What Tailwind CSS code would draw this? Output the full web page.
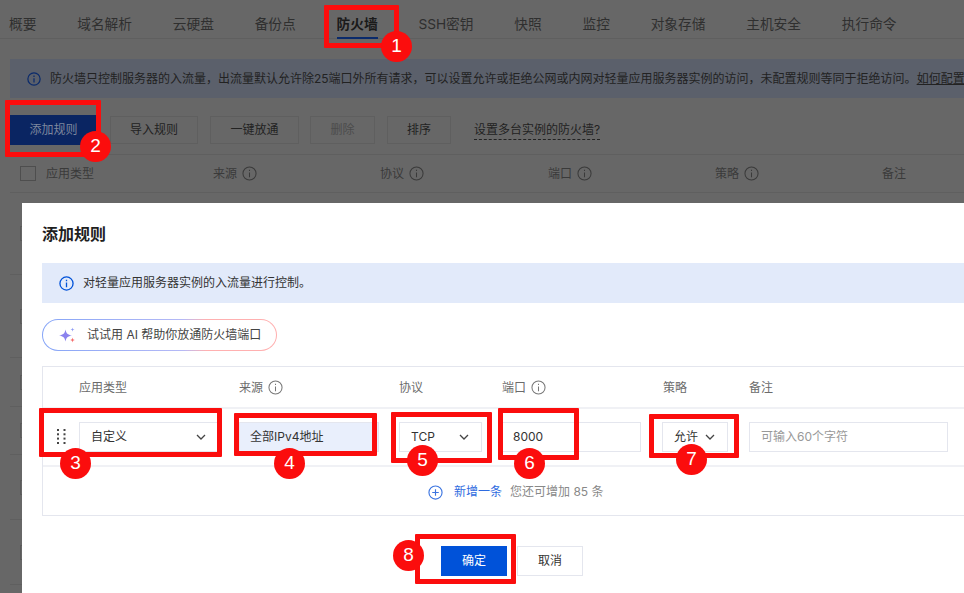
<!DOCTYPE html>
<html lang="zh-CN">
<head>
  <meta charset="UTF-8" />
  <title>添加规则</title>
  <script src="https://cdn.jsdelivr.net/npm/@tailwindcss/browser@4"></script>
</head>
<body class="w-[964px] h-[593px] overflow-hidden relative bg-[#676767] text-[#2b2b2b] font-['Inter','Noto_Sans_CJK_SC',sans-serif] text-[12px]">

  <!-- page behind the dialog -->
  <div class="flex items-center gap-[40.8px] h-[39px] pl-[9px] pt-[10px] border-b border-[#5f5f5f] text-[13.7px] text-[#2f2f2f] whitespace-nowrap">
    <span>概要</span>
    <span>域名解析</span>
    <span>云硬盘</span>
    <span>备份点</span>
    <span class="relative font-semibold text-[#1a1a1a]">防火墙
      <span class="absolute left-0 right-0 top-[23px] h-[2px] bg-[#0a2a6b]"></span>
    </span>
    <span>SSH密钥</span>
    <span>快照</span>
    <span>监控</span>
    <span>对象存储</span>
    <span>主机安全</span>
    <span>执行命令</span>
  </div>

  <div class="ml-[10px] mt-[20px] h-[39px] pt-[1px] bg-[#5b606b] flex items-center pl-[17px] gap-[9px] whitespace-nowrap text-[#222]">
    <svg class="w-[14px] h-[14px] shrink-0" viewBox="0 0 16 16" fill="none" stroke="#0a2a6b" stroke-width="1.4"><circle cx="8" cy="8" r="7"/><path d="M8 7v5M8 4v1.6"/></svg>
    <span>防火墙只控制服务器的入流量，出流量默认允许除25端口外所有请求，可以设置允许或拒绝公网或内网对轻量应用服务器实例的访问，未配置规则等同于拒绝访问。<span class="underline">如何配置</span></span>
  </div>

  <div class="ml-[10px] mt-[18px] flex items-center h-[28px] whitespace-nowrap">
    <div class="w-[87px] h-[30px] bg-[#0a2562] text-[#7e889e] flex items-center justify-center">添加规则</div>
    <div class="ml-[13px] w-[88px] h-full border border-[#5f5f5f] text-[#222] flex items-center justify-center">导入规则</div>
    <div class="ml-[12px] w-[89px] h-full border border-[#5f5f5f] text-[#222] flex items-center justify-center">一键放通</div>
    <div class="ml-[11px] w-[65px] h-full border border-[#5f5f5f] text-[#4c4c4c] flex items-center justify-center">删除</div>
    <div class="ml-[12px] w-[64px] h-full border border-[#5f5f5f] text-[#222] flex items-center justify-center">排序</div>
    <span class="ml-[23px] border-b border-dashed border-[#222] text-[#222]">设置多台实例的防火墙?</span>
  </div>

  <div class="ml-[10px] mt-[10px] h-[39px] border-y border-[#5f5f5f] flex items-center text-[#3a3a3a] whitespace-nowrap">
    <span class="ml-[10px] w-[16px] h-[15px] border border-[#4e4e4e]"></span>
    <span class="ml-[10px] w-[167px]">应用类型</span>
    <span class="w-[167px] flex items-center gap-[5px]">来源 <svg class="w-[15px] h-[15px]" viewBox="0 0 16 16" fill="none" stroke="#3a3a3a" stroke-width="1.1"><circle cx="8" cy="8" r="7"/><path d="M8 7v5M8 4v1.4"/></svg></span>
    <span class="w-[168px] flex items-center gap-[5px]">协议 <svg class="w-[15px] h-[15px]" viewBox="0 0 16 16" fill="none" stroke="#3a3a3a" stroke-width="1.1"><circle cx="8" cy="8" r="7"/><path d="M8 7v5M8 4v1.4"/></svg></span>
    <span class="w-[167px] flex items-center gap-[5px]">端口 <svg class="w-[15px] h-[15px]" viewBox="0 0 16 16" fill="none" stroke="#3a3a3a" stroke-width="1.1"><circle cx="8" cy="8" r="7"/><path d="M8 7v5M8 4v1.4"/></svg></span>
    <span class="w-[167px] flex items-center gap-[5px]">策略 <svg class="w-[15px] h-[15px]" viewBox="0 0 16 16" fill="none" stroke="#3a3a3a" stroke-width="1.1"><circle cx="8" cy="8" r="7"/><path d="M8 7v5M8 4v1.4"/></svg></span>
    <span>备注</span>
  </div>

  <!-- table rows, only their left edge shows beside the dialog -->
  <div class="ml-[10px]">
    <div class="h-[82px] border-b border-[#5f5f5f] flex items-center pl-[10px]"><span class="w-[15px] h-[15px] border border-[#5a5a5a]"></span></div>
    <div class="h-[83px] border-b border-[#5f5f5f] flex items-center pl-[10px]"><span class="w-[15px] h-[15px] border border-[#5a5a5a]"></span></div>
    <div class="h-[49px] border-b border-[#5f5f5f] flex items-center pl-[10px]"><span class="w-[15px] h-[15px] border border-[#5a5a5a]"></span></div>
    <div class="h-[48px] border-b border-[#5f5f5f] flex items-center pl-[10px]"><span class="w-[15px] h-[15px] border border-[#5a5a5a]"></span></div>
    <div class="h-[65px] border-b border-[#5f5f5f] flex items-center pl-[10px]"><span class="w-[15px] h-[15px] border border-[#5a5a5a]"></span></div>
    <div class="h-[65px] border-b border-[#5f5f5f] flex items-center pl-[10px]"><span class="w-[15px] h-[15px] border border-[#5a5a5a]"></span></div>
  </div>

  <!-- dialog -->
  <div class="absolute left-[22px] top-[203px] w-[942px] h-[390px] bg-white pl-[20px] whitespace-nowrap overflow-hidden">
    <h3 class="pt-[21px] text-[16px] leading-[20px] font-semibold text-[#1f1f1f]">添加规则</h3>

    <div class="mt-[19px] h-[40px] bg-[#e2eafa] flex items-center pl-[17px] gap-[9px] text-[#333]">
      <svg class="w-[15px] h-[15px] shrink-0" viewBox="0 0 16 16" fill="none" stroke="#0052d9" stroke-width="1.4"><circle cx="8" cy="8" r="7"/><path d="M8 7v5M8 4v1.6"/></svg>
      <span>对轻量应用服务器实例的入流量进行控制。</span>
    </div>

    <div class="mt-[16px] w-[235px] h-[32px] rounded-full p-px bg-gradient-to-r from-[#86a5f7] via-[#b5b9f6] via-60% to-[#ffb0b0] to-70%">
      <div class="w-full h-full rounded-full bg-white flex items-center pl-[16px] gap-[11px] text-[#444]">
        <svg class="w-[17px] h-[17px] shrink-0" viewBox="0 0 17 17"><path d="M6.500 2.500C7.200 6.300 8.700 7.800 13 8.500 8.700 9.200 7.200 10.700 6.500 14.500 5.800 10.700 4.300 9.200 0 8.500 4.300 7.800 5.800 6.300 6.500 2.500Z" fill="#8b83ee"/><path d="M13.500 .5c.3 1.500.6 1.800 2 2.100-1.400.3-1.700.6-2 2.100-.3-1.500-.6-1.800-2-2.100 1.400-.3 1.700-.6 2-2.100Z" fill="#8f9cf5"/><path d="M13.500 10.500c.3 1.800.7 2.200 2.500 2.500-1.800.3-2.200.7-2.500 2.500-.3-1.800-.7-2.200-2.500-2.500 1.800-.3 2.200-.7 2.500-2.500Z" fill="#f56c6c"/></svg>
        <span>试试用 AI 帮助你放通防火墙端口</span>
      </div>
    </div>

    <div class="mt-[15px] w-[960px] h-[150px] border border-[#e4e6ee]">
      <div class="h-[40px] pt-[1px] flex items-center text-[#6b6b6b]">
        <span class="ml-[36px] w-[160px]">应用类型</span>
        <span class="w-[160px] flex items-center gap-[5px]">来源 <svg class="w-[15px] h-[15px]" viewBox="0 0 16 16" fill="none" stroke="#777" stroke-width="1.1"><circle cx="8" cy="8" r="7"/><path d="M8 7v5M8 4v1.4"/></svg></span>
        <span class="w-[103px]">协议</span>
        <span class="w-[161px] flex items-center gap-[5px]">端口 <svg class="w-[15px] h-[15px]" viewBox="0 0 16 16" fill="none" stroke="#777" stroke-width="1.1"><circle cx="8" cy="8" r="7"/><path d="M8 7v5M8 4v1.4"/></svg></span>
        <span class="w-[86px]">策略</span>
        <span>备注</span>
      </div>
      <div class="h-[60px] pb-[1px] border-y-2 border-[#f0f1f5] flex items-center text-[#333]">
        <svg class="ml-[14px] w-[9px] h-[15px] shrink-0" viewBox="0 0 9 15" fill="#444"><rect x="0" y="0" width="2" height="2"/><rect x="6.500" y="0" width="2" height="2"/><rect x="0" y="4.300" width="2" height="2"/><rect x="6.500" y="4.300" width="2" height="2"/><rect x="0" y="8.600" width="2" height="2"/><rect x="6.500" y="8.600" width="2" height="2"/><rect x="0" y="13" width="2" height="2"/><rect x="6.500" y="13" width="2" height="2"/></svg>
        <div class="ml-[13px] w-[139px] h-[30px] shrink-0 border border-[#e4e6ee] flex items-center justify-between pl-[11px] pr-[11px]">
          <span>自定义</span>
          <svg class="w-[10px] h-[6px]" viewBox="0 0 10 6" fill="none" stroke="#444" stroke-width="1.3"><path d="M1 1l4 4 4-4"/></svg>
        </div>
        <div class="ml-[21px] w-[140px] h-[30px] shrink-0 bg-[#e9effc] border border-[#e4e6ee] flex items-center pl-[10px]">全部IPv4地址</div>
        <div class="ml-[20px] w-[83px] h-[30px] shrink-0 border border-[#e4e6ee] flex items-center justify-between pl-[11px] pr-[12px]">
          <span>TCP</span>
          <svg class="w-[10px] h-[6px]" viewBox="0 0 10 6" fill="none" stroke="#444" stroke-width="1.3"><path d="M1 1l4 4 4-4"/></svg>
        </div>
        <div class="ml-[20px] w-[139px] h-[30px] shrink-0 border border-[#e4e6ee] flex items-center pl-[10px]">8000</div>
        <div class="ml-[21px] w-[66px] h-[30px] shrink-0 border border-[#e4e6ee] flex items-center justify-between pl-[11px] pr-[12px]">
          <span>允许</span>
          <svg class="w-[10px] h-[6px]" viewBox="0 0 10 6" fill="none" stroke="#444" stroke-width="1.3"><path d="M1 1l4 4 4-4"/></svg>
        </div>
        <div class="ml-[21px] w-[199px] h-[30px] shrink-0 border border-[#e4e6ee] flex items-center pl-[11px] text-[#999]">可输入60个字符</div>
      </div>
      <div class="h-[48px] pt-[2px] flex items-center pl-[385px]">
        <svg class="w-[15px] h-[15px]" viewBox="0 0 16 16" fill="none" stroke="#3b74e0" stroke-width="1.2"><circle cx="8" cy="8" r="7"/><path d="M8 4.500v7M4.500 8h7"/></svg>
        <span class="ml-[11px] text-[#2f6be0]">新增一条</span>
        <span class="ml-[8px] text-[#888]">您还可增加 85 条</span>
      </div>
    </div>

    <div class="mt-[30px] ml-[399px] flex gap-[10px]">
      <div class="w-[66px] h-[30px] bg-[#0052d9] text-white flex items-center justify-center">确定</div>
      <div class="w-[66px] h-[30px] border border-[#e4e6ee] text-[#333] flex items-center justify-center">取消</div>
    </div>
  </div>

  <!-- red callouts drawn over the screenshot -->
  <div class="absolute left-[324px] top-[5px] w-[75px] h-[43px] border-[5px] border-[#fb0d0d] rounded-[1px]"></div>
  <div class="absolute left-[5px] top-[100px] w-[96px] h-[57px] border-[5px] border-[#fb0d0d] rounded-[1px]"></div>
  <div class="absolute left-[39px] top-[408px] w-[183px] h-[49px] border-[5px] border-[#fb0d0d] rounded-[1px]"></div>
  <div class="absolute left-[234px] top-[413px] w-[143px] h-[43px] border-[5px] border-[#fb0d0d] rounded-[1px]"></div>
  <div class="absolute left-[391px] top-[412px] w-[101px] h-[51px] border-[5px] border-[#fb0d0d] rounded-[1px]"></div>
  <div class="absolute left-[498px] top-[408px] w-[81px] h-[52px] border-[5px] border-[#fb0d0d] rounded-[1px]"></div>
  <div class="absolute left-[649px] top-[414px] w-[90px] h-[44px] border-[5px] border-[#fb0d0d] rounded-[1px]"></div>
  <div class="absolute left-[415px] top-[534px] w-[101px] h-[50px] border-[5px] border-[#fb0d0d] rounded-[1px]"></div>

  <div class="absolute left-[381px] top-[31px] w-[31px] h-[31px] rounded-full bg-[#fb0d0d] text-white text-[19px] font-['Liberation_Sans'] flex items-center justify-center">1</div>
  <div class="absolute left-[80px] top-[131px] w-[31px] h-[31px] rounded-full bg-[#fb0d0d] text-white text-[19px] font-['Liberation_Sans'] flex items-center justify-center">2</div>
  <div class="absolute left-[60px] top-[448px] w-[31px] h-[31px] rounded-full bg-[#fb0d0d] text-white text-[19px] font-['Liberation_Sans'] flex items-center justify-center">3</div>
  <div class="absolute left-[274px] top-[448px] w-[31px] h-[31px] rounded-full bg-[#fb0d0d] text-white text-[19px] font-['Liberation_Sans'] flex items-center justify-center">4</div>
  <div class="absolute left-[407px] top-[445px] w-[31px] h-[31px] rounded-full bg-[#fb0d0d] text-white text-[19px] font-['Liberation_Sans'] flex items-center justify-center">5</div>
  <div class="absolute left-[514px] top-[448px] w-[31px] h-[31px] rounded-full bg-[#fb0d0d] text-white text-[19px] font-['Liberation_Sans'] flex items-center justify-center">6</div>
  <div class="absolute left-[676px] top-[444px] w-[31px] h-[31px] rounded-full bg-[#fb0d0d] text-white text-[19px] font-['Liberation_Sans'] flex items-center justify-center">7</div>
  <div class="absolute left-[393px] top-[540px] w-[31px] h-[31px] rounded-full bg-[#fb0d0d] text-white text-[19px] font-['Liberation_Sans'] flex items-center justify-center">8</div>
</body>
</html>
